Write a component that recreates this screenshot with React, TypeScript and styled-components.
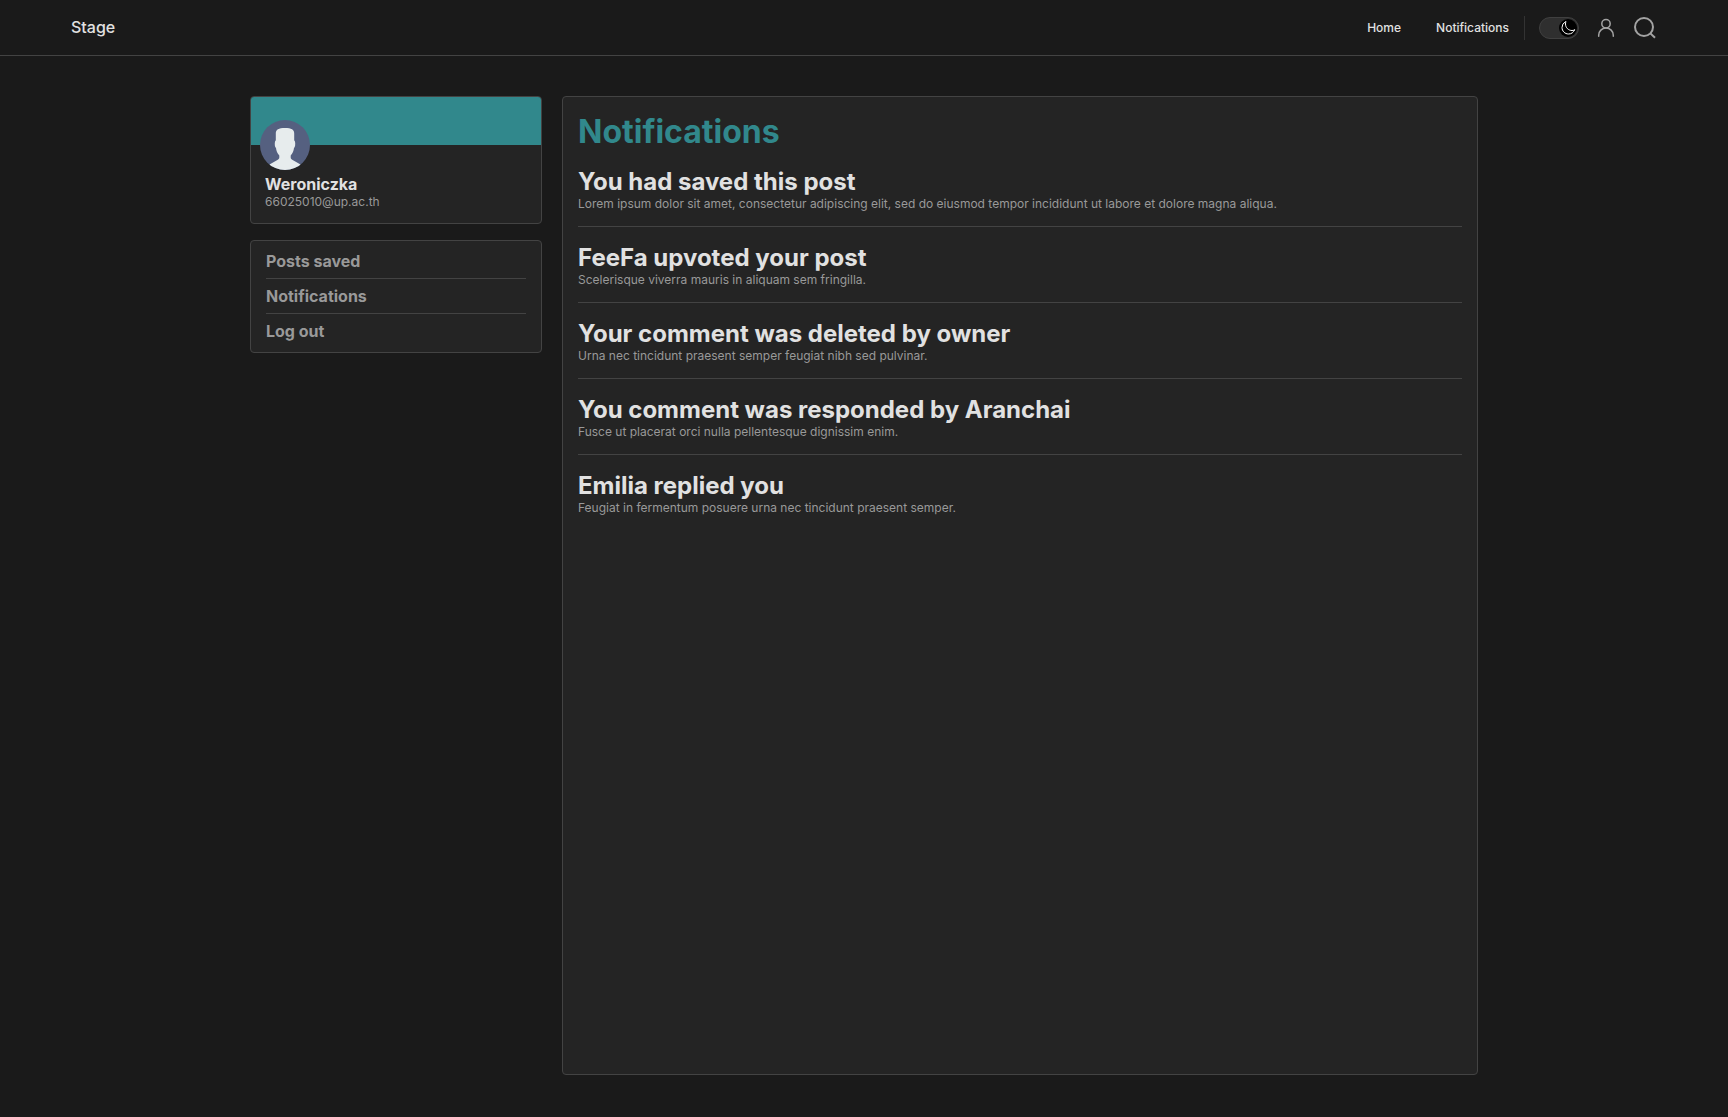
import React, { useState } from "react";
import styled, { createGlobalStyle } from "styled-components";

const color = {
  page: "#1a1a1a",
  panel: "#242424",
  line: "#434343",
  accent: "#31888c",
  text: "#e1e1e1",
  muted: "#999999",
};

const GlobalStyle = createGlobalStyle`
  *, *::before, *::after { box-sizing: border-box; }
  body {
    margin: 0;
    background: ${color.page};
    color: ${color.text};
    font-family: Inter, "Liberation Sans", sans-serif;
    -webkit-font-smoothing: antialiased;
    text-rendering: optimizeLegibility;
  }
  h1, h2, p, ul { margin: 0; padding: 0; }
  ul { list-style: none; }
  a { color: inherit; text-decoration: none; }
  button { padding: 0; border: 0; background: none; color: inherit; font: inherit; cursor: pointer; }
`;

const Page = styled.div`
  display: flex;
  flex-direction: column;
  min-height: 100vh;
`;

const Header = styled.header`
  display: flex;
  align-items: center;
  justify-content: space-between;
  height: 56px;
  padding: 0 71px;
  border-bottom: 1px solid ${color.line};
`;

const Brand = styled.a`
  font-size: 16px;
  font-weight: 500;
  line-height: 19px;
`;

const HeaderEnd = styled.div`
  display: flex;
  align-items: center;
`;

const Nav = styled.nav`
  display: flex;
  gap: 35px;
  padding-right: 15px;
  border-right: 1px solid #333333;
  font-size: 12px;
  font-weight: 500;
  line-height: 24px;
`;

const Tools = styled.div`
  display: flex;
  align-items: center;
  gap: 15px;
  padding-left: 14px;
`;

const Switch = styled.label`
  position: relative;
  display: block;
  width: 40px;
  height: 22px;
`;

const SwitchInput = styled.input`
  appearance: none;
  display: block;
  width: 100%;
  height: 100%;
  margin: 0;
  border: 1px solid #404040;
  border-radius: 11px;
  background: #2f2f2f;
  cursor: pointer;
`;

const Knob = styled.span<{ $on: boolean }>`
  position: absolute;
  top: 2px;
  left: ${(p) => (p.$on ? 20 : 2)}px;
  display: grid;
  place-items: center;
  width: 18px;
  height: 18px;
  border-radius: 50%;
  background: #000000;
  pointer-events: none;
`;

const IconButton = styled.button`
  display: grid;
  place-items: center;
  width: 24px;
  height: 24px;
  color: #a3a3a3;
`;

const Main = styled.main`
  flex: 1;
  display: grid;
  grid-template-columns: 292px 1fr;
  gap: 20px;
  width: 100%;
  max-width: 1268px;
  margin: 0 auto;
  padding: 40px 20px 42px;
`;

const Sidebar = styled.aside`
  display: flex;
  flex-direction: column;
  gap: 16px;
`;

const Card = styled.section`
  overflow: hidden;
  border: 1px solid ${color.line};
  border-radius: 4px;
  background: ${color.panel};
`;

const Banner = styled.div`
  height: 48px;
  background: ${color.accent};
`;

const Avatar = styled.svg`
  display: block;
  width: 50px;
  height: 50px;
  margin: -25px 0 0 9px;
`;

const ProfileText = styled.div`
  padding: 5px 14px 14px;
`;

const Name = styled.h2`
  font-size: 16px;
  font-weight: 700;
  line-height: 19px;
`;

const Detail = styled.p`
  color: ${color.muted};
  font-size: 12px;
  line-height: 15px;
`;

const Menu = styled.ul`
  padding: 3px 15px 4px;
`;

const MenuItem = styled.li`
  display: flex;
  padding: 8px 0 7px;
  color: ${color.muted};
  font-size: 16px;
  font-weight: 700;
  line-height: 19px;
  & + & { border-top: 1px solid ${color.line}; }
`;

const Feed = styled(Card)`
  padding: 15px 15px 0;
`;

const Title = styled.h1`
  color: ${color.accent};
  font-size: 32px;
  font-weight: 700;
  line-height: 39px;
`;

const Notice = styled.li`
  padding: 16px 0 15px;
  & + & { border-top: 1px solid ${color.line}; }
`;

const NoticeTitle = styled.h2`
  font-size: 24px;
  font-weight: 700;
  line-height: 29px;
`;

const notices = [
  {
    title: "You had saved this post",
    body: "Lorem ipsum dolor sit amet, consectetur adipiscing elit, sed do eiusmod tempor incididunt ut labore et dolore magna aliqua.",
  },
  { title: "FeeFa upvoted your post", body: "Scelerisque viverra mauris in aliquam sem fringilla." },
  { title: "Your comment was deleted by owner", body: "Urna nec tincidunt praesent semper feugiat nibh sed pulvinar." },
  { title: "You comment was responded by Aranchai", body: "Fusce ut placerat orci nulla pellentesque dignissim enim." },
  { title: "Emilia replied you", body: "Feugiat in fermentum posuere urna nec tincidunt praesent semper." },
];

function MoonIcon() {
  return (
    <svg width="16" height="16" viewBox="0 0 24 24" fill="none" stroke="#ffffff" strokeWidth="1.5" strokeLinecap="round" strokeLinejoin="round" aria-hidden="true">
      <path d="M21.752 15.002A9.718 9.718 0 0 1 18 15.75c-5.385 0-9.75-4.365-9.75-9.75 0-1.33.266-2.597.748-3.752A9.753 9.753 0 0 0 3 11.25C3 16.635 7.365 21 12.75 21a9.753 9.753 0 0 0 9.002-5.998z" />
    </svg>
  );
}

function UserIcon() {
  return (
    <svg width="24" height="24" viewBox="0 0 24 24" fill="none" stroke="currentColor" strokeWidth="1.5" strokeLinecap="round" aria-hidden="true">
      <circle cx="12" cy="7.8" r="4.2" />
      <path d="M4.7 20.3v-1.1a7.3 7.2 0 0 1 14.6 0v1.1" />
    </svg>
  );
}

function SearchIcon() {
  return (
    <svg width="24" height="24" viewBox="0 0 24 24" fill="none" stroke="currentColor" strokeWidth="2" aria-hidden="true">
      <circle cx="11" cy="11" r="9" />
      <path d="M17.4 17.4l4.6 4.4" />
    </svg>
  );
}

function ProfilePicture() {
  return (
    <Avatar viewBox="0 0 50 50" role="img" aria-label="Weroniczka">
      <defs>
        <clipPath id="avatar-disc">
          <circle cx="25" cy="25" r="25" />
        </clipPath>
      </defs>
      <g clipPath="url(#avatar-disc)">
        <rect width="50" height="50" fill="#556080" />
        <path
          fill="#e7eced"
          d="M25 8C18.500 8 15.800 9.500 15.800 13.500V20C15.800 20.500 15.400 20.800 15 21.500C14.500 24 14.800 27.300 16 28C16.300 30.500 17.300 33.500 19.300 35.400V37.500C19.300 38.600 18.700 39.300 17.800 39.700L9.500 44.500V50H40.500V44.500L32.200 39.700C31.300 39.300 30.700 38.600 30.700 37.500V35.400C32.700 33.500 33.700 30.500 34 28C35.200 27.300 35.500 24 35 21.500C34.600 20.800 34.200 20.500 34.200 20V13.500C34.200 9.500 31.500 8 25 8Z"
        />
      </g>
    </Avatar>
  );
}

export default function App() {
  const [dark, setDark] = useState(true);

  return (
    <Page>
      <GlobalStyle />
      <Header>
        <Brand href="#stage">Stage</Brand>
        <HeaderEnd>
          <Nav aria-label="Main">
            <a href="#home">Home</a>
            <a href="#notifications">Notifications</a>
          </Nav>
          <Tools>
            <Switch>
              <SwitchInput
                type="checkbox"
                role="switch"
                aria-label="Dark mode"
                checked={dark}
                onChange={(e) => setDark(e.target.checked)}
              />
              <Knob $on={dark}>
                <MoonIcon />
              </Knob>
            </Switch>
            <IconButton type="button" aria-label="Account">
              <UserIcon />
            </IconButton>
            <IconButton type="button" aria-label="Search">
              <SearchIcon />
            </IconButton>
          </Tools>
        </HeaderEnd>
      </Header>
      <Main>
        <Sidebar>
          <Card>
            <Banner />
            <ProfilePicture />
            <ProfileText>
              <Name>Weroniczka</Name>
              <Detail>66025010@up.ac.th</Detail>
            </ProfileText>
          </Card>
          <Card as="nav" aria-label="Account">
            <Menu>
              <MenuItem><a href="#saved">Posts saved</a></MenuItem>
              <MenuItem><a href="#notifications">Notifications</a></MenuItem>
              <MenuItem><button type="button">Log out</button></MenuItem>
            </Menu>
          </Card>
        </Sidebar>
        <Feed id="notifications">
          <Title>Notifications</Title>
          <ul>
            {notices.map((n) => (
              <Notice key={n.title}>
                <NoticeTitle>{n.title}</NoticeTitle>
                <Detail>{n.body}</Detail>
              </Notice>
            ))}
          </ul>
        </Feed>
      </Main>
    </Page>
  );
}
